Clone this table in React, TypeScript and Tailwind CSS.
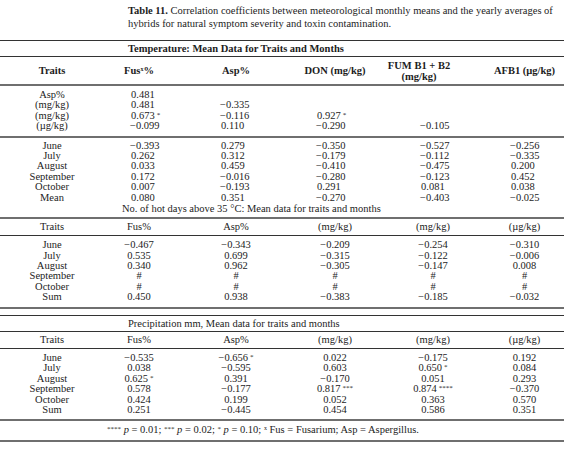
const serif = "font-['Liberation_Serif','Times_New_Roman',serif]";

type Cell = string;

// centered columns (headers, hot-days and precipitation blocks)
const centerCols = "grid grid-cols-[95px_88px_106px_92px_104px_79px]";
// first block of the temperature part is left aligned at fixed starts
const leftCols = "grid grid-cols-[130px_90px_96px_104px_90px_54px]";

function Num({ v }: { v: Cell }) {
    const m = v.match(/^(\S+)\s*(\*+)?$/);
    const base = m ? m[1] : v;
    const stars = m && m[2] ? m[2] : "";
    return (
        <span>
            {base}
            {stars && <span className="ml-[2px] text-[7px] relative -top-[2px]">{stars}</span>}
        </span>
    );
}

function Row({ cells, left = false }: { cells: Cell[]; left?: boolean }) {
    if (left) {
        return (
            <div className={`${leftCols} h-[10.4px] leading-[10.4px]`}>
                <div className="w-[104px] text-center">{cells[0]}</div>
                {cells.slice(1).map((c, i) => (
                    <div key={i} className={`whitespace-nowrap ${c.startsWith("−") ? "" : "pl-[1px]"}`}>
                        <Num v={c} />
                    </div>
                ))}
            </div>
        );
    }
    return (
        <div className={`${centerCols} h-[10.4px] leading-[10.4px]`}>
            <div className="text-center pl-[9px]">{cells[0]}</div>
            {cells.slice(1).map((c, i) => (
                <div key={i} className="text-center whitespace-nowrap">
                    <Num v={c} />
                </div>
            ))}
        </div>
    );
}

const Thin = () => <div className="h-px bg-[#333]" />;
const Thick = () => <div className="h-[2px] bg-[#6f6f6f]" />;

const unitsHeader = ["Traits", "Fus%", "Asp%", "(mg/kg)", "(mg/kg)", "(µg/kg)"];

export default function App() {
    return (
        <div className={`w-[564px] h-[449px] bg-white text-[#1c1c1c] text-[10.5px] ${serif}`}>
            <p className="pl-[128px] pr-[2px] pt-[4px] leading-[13px]">
                <b>Table 11.</b> Correlation coefficients between meteorological monthly means and the yearly averages of
                hybrids for natural symptom severity and toxin contamination.
            </p>

            <div className="mt-[10px]">
                <Thin />
                <div className="h-[15px] leading-[15px] pl-[128px] font-bold">
                    Temperature: Mean Data for Traits and Months
                </div>
                <Thin />
                <div className={`${centerCols} h-[27px] items-center font-bold leading-[11px]`}>
                    <div className="text-center pl-[9px]">Traits</div>
                    <div className="text-center">
                        Fus<sup className="text-[6px] -top-[3px]">x</sup>%
                    </div>
                    <div className="text-center">Asp%</div>
                    <div className="text-center">DON (mg/kg)</div>
                    <div className="text-center pr-[28px] whitespace-nowrap">
                        FUM B1 + B2
                        <br />
                        (mg/kg)
                    </div>
                    <div className="text-center whitespace-nowrap">AFB1 (µg/kg)</div>
                </div>
                <Thick />

                <div className="py-[4px]">
                    <Row left cells={["Asp%", "0.481", "", "", "", ""]} />
                    <Row left cells={["(mg/kg)", "0.481", "−0.335", "", "", ""]} />
                    <Row left cells={["(mg/kg)", "0.673 *", "−0.116", "0.927 *", "", ""]} />
                    <Row left cells={["(µg/kg)", "−0.099", "0.110", "−0.290", "−0.105", ""]} />
                </div>
                <Thick />

                <div className="pt-[3px] pb-[2px]">
                    <Row left cells={["June", "−0.393", "0.279", "−0.350", "−0.527", "−0.256"]} />
                    <Row left cells={["July", "0.262", "0.312", "−0.179", "−0.112", "−0.335"]} />
                    <Row left cells={["August", "0.033", "0.459", "−0.410", "−0.475", "0.200"]} />
                    <Row left cells={["September", "0.172", "−0.016", "−0.280", "−0.123", "0.452"]} />
                    <Row left cells={["October", "0.007", "−0.193", "0.291", "0.081", "0.038"]} />
                    <Row left cells={["Mean", "0.080", "0.351", "−0.270", "−0.403", "−0.025"]} />
                    <div className="h-[12px] leading-[12px] pl-[122px]">
                        No. of hot days above 35 °C: Mean data for traits and months
                    </div>
                </div>
                <Thick />
                <div className="py-[3px]">
                    <Row cells={unitsHeader} />
                </div>
                <Thin />
                <div className="py-[4px]">
                    <Row cells={["June", "−0.467", "−0.343", "−0.209", "−0.254", "−0.310"]} />
                    <Row cells={["July", "0.535", "0.699", "−0.315", "−0.122", "−0.006"]} />
                    <Row cells={["August", "0.340", "0.962", "−0.305", "−0.147", "0.008"]} />
                    <Row cells={["September", "#", "#", "#", "#", "#"]} />
                    <Row cells={["October", "#", "#", "#", "#", "#"]} />
                    <Row cells={["Sum", "0.450", "0.938", "−0.383", "−0.185", "−0.032"]} />
                </div>
                <Thick />
                <div className="h-[6px]" />
                <Thin />
                <div className="py-[3px] pl-[128px] h-[15px] leading-[10px]">
                    Precipitation mm, Mean data for traits and months
                </div>
                <Thin />
                <div className="py-[3px]">
                    <Row cells={unitsHeader} />
                </div>
                <Thin />
                <div className="py-[4px]">
                    <Row cells={["June", "−0.535", "−0.656 *", "0.022", "−0.175", "0.192"]} />
                    <Row cells={["July", "0.038", "−0.595", "0.603", "0.650 *", "0.084"]} />
                    <Row cells={["August", "0.625 *", "0.391", "−0.170", "0.051", "0.293"]} />
                    <Row cells={["September", "0.578", "−0.177", "0.817 ***", "0.874 ****", "−0.370"]} />
                    <Row cells={["October", "0.424", "0.199", "0.052", "0.363", "0.570"]} />
                    <Row cells={["Sum", "0.251", "−0.445", "0.454", "0.586", "0.351"]} />
                </div>
                <Thick />
                <div className="py-[4px] pl-[107px] leading-[10px] whitespace-nowrap">
                    <span className="text-[7px] relative -top-[2px]">****</span> <i>p</i> = 0.01;{" "}
                    <span className="text-[7px] relative -top-[2px]">***</span> <i>p</i> = 0.02;{" "}
                    <span className="text-[7px] relative -top-[2px]">*</span> <i>p</i> = 0.10;{" "}
                    <sup className="text-[6px] -top-[3px]">x</sup> Fus = Fusarium; Asp = Aspergillus.
                </div>
                <Thick />
            </div>
        </div>
    );
}
